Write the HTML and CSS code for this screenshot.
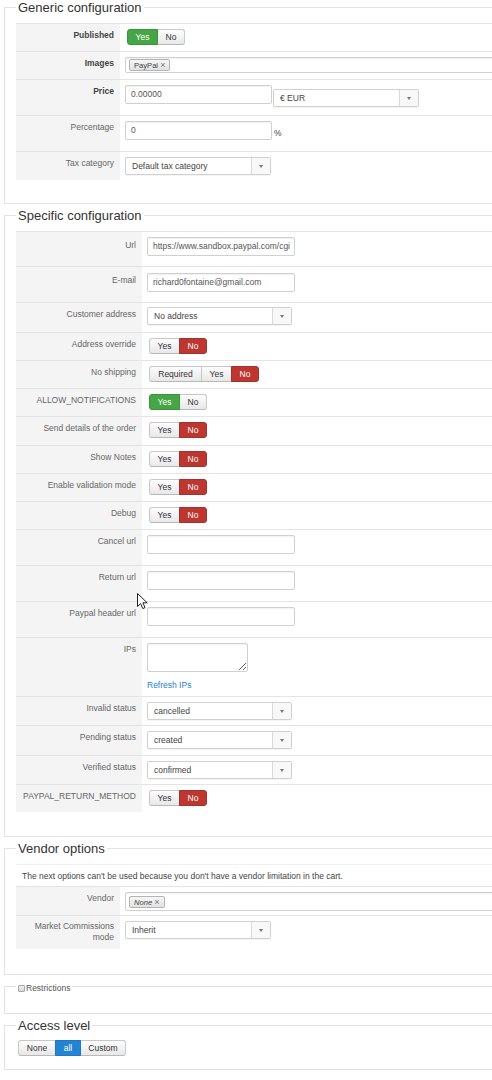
FILE: index.html
```html
<!DOCTYPE html>
<html lang="en">
<head>
<meta charset="utf-8">
<title>Payment method</title>
<link rel="stylesheet" href="styles.css">
</head>
<body>
<form class="page">

  <fieldset class="box box-generic">
    <legend>Generic configuration</legend>
    <div class="table">
      <div class="row r28">
        <div class="lbl strong">Published</div>
        <div class="ctl">
          <span class="tg"><span class="btn w30 green">Yes</span><span class="btn w27">No</span></span>
        </div>
      </div>
      <div class="row r28">
        <div class="lbl strong">Images</div>
        <div class="ctl">
          <div class="field tags grow"><span class="chip">PayPal <span class="x">&#215;</span></span></div>
        </div>
      </div>
      <div class="row r36">
        <div class="lbl strong">Price</div>
        <div class="ctl">
          <div class="field w147">0.00000</div>
          <div class="select w146 drop4"><span class="val">&#8364; EUR</span><span class="arrow"><i></i></span></div>
        </div>
      </div>
      <div class="row r36">
        <div class="lbl">Percentage</div>
        <div class="ctl">
          <div class="field w147">0</div>
          <span class="unit">%</span>
        </div>
      </div>
      <div class="row r29 last">
        <div class="lbl">Tax category</div>
        <div class="ctl">
          <div class="select w146"><span class="val">Default tax category</span><span class="arrow"><i></i></span></div>
        </div>
      </div>
    </div>
  </fieldset>

  <fieldset class="box box-specific">
    <legend>Specific configuration</legend>
    <div class="table wide">
      <div class="row r35">
        <div class="lbl low">Url</div>
        <div class="ctl"><div class="field w148">https://www.sandbox.paypal.com/cgi</div></div>
      </div>
      <div class="row r36">
        <div class="lbl low">E-mail</div>
        <div class="ctl ctl-down"><div class="field w148">richard0fontaine@gmail.com</div></div>
      </div>
      <div class="row r30">
        <div class="lbl">Customer address</div>
        <div class="ctl ctl-up"><div class="select w145"><span class="val">No address</span><span class="arrow"><i></i></span></div></div>
      </div>
      <div class="row r28">
        <div class="lbl">Address override</div>
        <div class="ctl"><span class="tg"><span class="btn w30">Yes</span><span class="btn w27 red">No</span></span></div>
      </div>
      <div class="row r28">
        <div class="lbl">No shipping</div>
        <div class="ctl"><span class="tg"><span class="btn w52">Required</span><span class="btn w30">Yes</span><span class="btn w27 red">No</span></span></div>
      </div>
      <div class="row r28">
        <div class="lbl">ALLOW_NOTIFICATIONS</div>
        <div class="ctl"><span class="tg"><span class="btn w30 green">Yes</span><span class="btn w27">No</span></span></div>
      </div>
      <div class="row r29">
        <div class="lbl">Send details of the order</div>
        <div class="ctl"><span class="tg"><span class="btn w30">Yes</span><span class="btn w27 red">No</span></span></div>
      </div>
      <div class="row r28">
        <div class="lbl">Show Notes</div>
        <div class="ctl"><span class="tg"><span class="btn w30">Yes</span><span class="btn w27 red">No</span></span></div>
      </div>
      <div class="row r28">
        <div class="lbl">Enable validation mode</div>
        <div class="ctl"><span class="tg"><span class="btn w30">Yes</span><span class="btn w27 red">No</span></span></div>
      </div>
      <div class="row r28">
        <div class="lbl">Debug</div>
        <div class="ctl"><span class="tg"><span class="btn w30">Yes</span><span class="btn w27 red">No</span></span></div>
      </div>
      <div class="row r36">
        <div class="lbl">Cancel url</div>
        <div class="ctl"><div class="field w148"></div></div>
      </div>
      <div class="row r36">
        <div class="lbl">Return url</div>
        <div class="ctl"><div class="field w148"></div></div>
      </div>
      <div class="row r36">
        <div class="lbl">Paypal header url</div>
        <div class="ctl"><div class="field w148"></div></div>
      </div>
      <div class="row r59">
        <div class="lbl">IPs</div>
        <div class="ctl ctl-col">
          <textarea class="area" aria-label="IPs"></textarea>
          <a class="link" href="#">Refresh IPs</a>
        </div>
      </div>
      <div class="row r29">
        <div class="lbl">Invalid status</div>
        <div class="ctl"><div class="select w145"><span class="val">cancelled</span><span class="arrow"><i></i></span></div></div>
      </div>
      <div class="row r30">
        <div class="lbl">Pending status</div>
        <div class="ctl"><div class="select w145"><span class="val">created</span><span class="arrow"><i></i></span></div></div>
      </div>
      <div class="row r29">
        <div class="lbl">Verified status</div>
        <div class="ctl"><div class="select w145"><span class="val">confirmed</span><span class="arrow"><i></i></span></div></div>
      </div>
      <div class="row r28 last">
        <div class="lbl">PAYPAL_RETURN_METHOD</div>
        <div class="ctl"><span class="tg"><span class="btn w30">Yes</span><span class="btn w27 red">No</span></span></div>
      </div>
    </div>
  </fieldset>

  <fieldset class="box box-vendor">
    <legend>Vendor options</legend>
    <div class="table">
      <div class="note">The next options can't be used because you don't have a vendor limitation in the cart.</div>
      <div class="row r29">
        <div class="lbl">Vendor</div>
        <div class="ctl"><div class="field tags grow"><span class="chip chip-em">None <span class="x">&#215;</span></span></div></div>
      </div>
      <div class="row r34 last">
        <div class="lbl two">Market Commissions<br>mode</div>
        <div class="ctl"><div class="select w146"><span class="val">Inherit</span><span class="arrow"><i></i></span></div></div>
      </div>
    </div>
  </fieldset>

  <fieldset class="box box-restrict">
    <legend class="small-legend"><span class="check"></span>Restrictions</legend>
  </fieldset>

  <fieldset class="box box-access">
    <legend>Access level</legend>
    <span class="tg"><span class="btn w37">None</span><span class="btn w25 blue">all</span><span class="btn w45">Custom</span></span>
  </fieldset>

</form>

<svg class="pointer" width="12" height="17" viewBox="0 0 12 17" aria-hidden="true">
  <path d="M0.5 0.5 L0.5 13.5 L3.6 10.6 L5.8 15.6 L8 14.6 L5.9 9.8 L10.2 9.8 Z" fill="#fff" stroke="#222" stroke-width="1" stroke-linejoin="round"/>
</svg>
</body>
</html>
```

FILE: styles.css
```css
* {
  box-sizing: border-box;
}

html {
  overflow: hidden;
}

body {
  margin: 0;
  position: relative;
  background: #fff;
  font-family: "Liberation Sans", Arial, Helvetica, sans-serif;
  font-size: 8.5px;
  color: #555;
}

.page {
  margin: 0;
}

/* ---- fieldsets ---- */
.box {
  margin: 4px 0 0 4px;
  width: 700px;
  min-width: 0;
  border: 1px solid #e2e2e2;
  padding: 8px 0 23px 11px;
}

.box-generic {
  margin-top: 0;
}

.box-specific {
  padding-bottom: 24px;
}

.box-vendor {
  padding-bottom: 25px;
}

.box-restrict {
  padding: 0 0 19px 11px;
}

.box-access {
  padding: 7px 0 13px 11px;
}

legend {
  padding: 0 2px;
  font-size: 13px;
  line-height: 15px;
  color: #333;
}

.small-legend {
  display: flex;
  align-items: flex-start;
  font-size: 8.5px;
  line-height: 12px;
  color: #555;
  padding: 3px 2px 0 2px;
}

.check {
  display: inline-block;
  width: 7px;
  height: 7px;
  margin: 3px 1px 0 0;
  border: 1px solid #a8a8a8;
  border-radius: 1px;
  background: linear-gradient(#f0f0f0, #d8d8d8);
}

/* ---- form table ---- */
.table {
  display: flex;
  flex-direction: column;
}

.row {
  display: flex;
  border-top: 1px solid #e4e4e4;
}

.r28 { height: 28px; }
.r29 { height: 29px; }
.r30 { height: 30px; }
.r34 { height: 34px; }
.r35 { height: 35px; }
.r36 { height: 36px; }
.r59 { height: 59px; }

.lbl {
  flex: 0 0 104px;
  background: #f4f4f4;
  text-align: right;
  padding: 5px 6px 0 0;
  line-height: 12px;
  color: #666;
  white-space: nowrap;
}

.wide .lbl {
  flex-basis: 126px;
}

.lbl.strong {
  font-weight: bold;
  color: #444;
}

.lbl.low {
  padding-top: 7px;
}

.lbl.two {
  line-height: 11px;
}

.ctl {
  flex: 1;
  display: flex;
  align-items: flex-start;
  padding: 5px 0 0 5px;
}

.ctl-down {
  padding-top: 6px;
}

.ctl-up {
  padding-top: 4px;
}

.ctl-col {
  flex-direction: column;
}

.note {
  height: 22px;
  border-top: 1px solid #f0f0f0;
  padding: 5px 0 0 6px;
  line-height: 12px;
  color: #444;
}

/* ---- text fields ---- */
.field {
  height: 19px;
  border: 1px solid #d0d0d0;
  border-radius: 2px;
  background: #fff;
  box-shadow: inset 0 1px 1px rgba(0, 0, 0, 0.06);
  padding: 0 5px;
  line-height: 17px;
  color: #555;
  white-space: nowrap;
  overflow: hidden;
}

.w145 { width: 145px; }
.w146 { width: 146px; }
.w147 { width: 147px; }
.w148 { width: 148px; }

.grow {
  flex: 1;
}

.tags {
  height: 16px;
  padding: 1px 3px;
  line-height: 12px;
  display: flex;
  align-items: center;
}

.r29 .tags {
  height: 19px;
}

.chip {
  display: inline-block;
  height: 12px;
  border: 1px solid #b4b4b4;
  border-radius: 2px;
  background: linear-gradient(#f6f6f6, #e2e2e2);
  padding: 0 4px;
  font-size: 7.6px;
  line-height: 10px;
  color: #444;
}

.chip-em {
  font-style: italic;
}

.chip .x {
  font-style: normal;
  color: #777;
  font-size: 9px;
}

.unit {
  padding: 6px 0 0 2px;
  line-height: 12px;
  color: #444;
}

/* ---- dropdowns ---- */
.select {
  display: flex;
  height: 18px;
  border: 1px solid #d0d0d0;
  border-radius: 2px;
  background: #fff;
  box-shadow: 0 1px 1px rgba(0, 0, 0, 0.05);
  color: #444;
}

.select .val {
  flex: 1;
  padding: 0 6px;
  line-height: 16px;
  white-space: nowrap;
  overflow: hidden;
}

.select .arrow {
  flex: 0 0 19px;
  border-left: 1px solid #d8d8d8;
  background: #f8f8f8;
  display: flex;
  align-items: center;
  justify-content: center;
}

.select .arrow i {
  width: 0;
  height: 0;
  border-left: 2.5px solid transparent;
  border-right: 2.5px solid transparent;
  border-top: 3px solid #777;
  margin-top: 1px;
}

.drop4 {
  margin: 4px 0 0 1px;
  width: 146px;
}

/* ---- button groups ---- */
.tg {
  display: inline-flex;
  height: 16px;
  margin-left: 2px;
}

.btn {
  display: inline-block;
  height: 16px;
  border: 1px solid #c8c8c8;
  border-bottom-color: #b8b8b8;
  background: linear-gradient(#fdfdfd, #e8e8e8);
  color: #333;
  text-align: center;
  line-height: 14px;
}

.btn + .btn {
  margin-left: -1px;
}

.btn:first-child {
  border-radius: 3px 0 0 3px;
}

.btn:last-child {
  border-radius: 0 3px 3px 0;
}

.btn.green {
  background: #46a546;
  border-color: #3a953a;
  color: #fff;
  position: relative;
}

.btn.red {
  background: #bd362f;
  border-color: #a8302a;
  color: #fff;
  position: relative;
}

.btn.blue {
  background: #2384d3;
  border-color: #1f78c1;
  color: #fff;
  position: relative;
}

.w25 { width: 26px; }
.w27 { width: 28px; }
.w30 { width: 31px; }
.w37 { width: 38px; }
.w45 { width: 46px; }
.w52 { width: 53px; }

/* ---- textarea ---- */
.area {
  display: block;
  width: 101px;
  height: 29px;
  margin: 0;
  border: 1px solid #d0d0d0;
  border-radius: 2px;
  box-shadow: inset 0 1px 1px rgba(0, 0, 0, 0.06);
  resize: both;
  font: inherit;
}

.link {
  margin-top: 7px;
  line-height: 12px;
  color: #2384d3;
  text-decoration: none;
}

/* ---- mouse pointer ---- */
.pointer {
  position: absolute;
  left: 137px;
  top: 593px;
}
```
